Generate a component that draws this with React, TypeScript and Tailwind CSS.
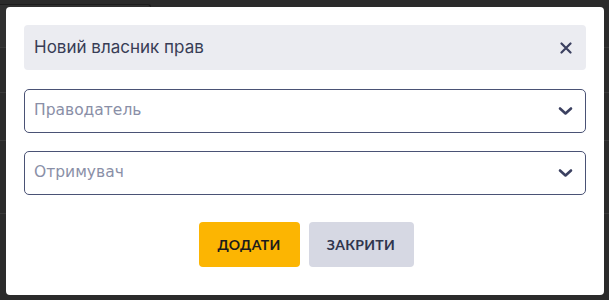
import React from "react";

function Chevron() {
  return (
    <svg width="15" height="14" viewBox="0 0 15 14" fill="none">
      <path d="M2 4.5 L7.5 9.5 L13 4.5" stroke="#3b4060" strokeWidth="2.6" strokeLinecap="round" strokeLinejoin="round" />
    </svg>
  );
}

function Select({ label }: { label: string }) {
  return (
    <div className="h-[44px] rounded-[5px] border border-[#4a5275] flex items-center justify-between pl-[9px] pr-[12px]">
      <span className="text-[15.5px] text-[#8a8fa7]" style={{ fontFamily: "'DejaVu Sans', 'Noto Sans', sans-serif" }}>
        {label}
      </span>
      <Chevron />
    </div>
  );
}

export default function App() {
  return (
    <div className="relative w-[609px] h-[300px] bg-[#2b2b2b] overflow-hidden">
      {/* faint backdrop page */}
      <div className="flex flex-col">
        <div className="h-[4px]" />
        <div className="w-[151px] h-[43px] border-t border-r border-[#1d1d1d] rounded-tr-[3px] bg-[#303030]" />
        <div className="h-[45px] border-t border-[#3a3a3a]" />
        <div className="h-[48px] border-t border-[#3a3a3a]" />
        <div className="h-[73px] border-t border-[#3a3a3a]" />
        <div className="h-[82px] border-t border-[#3a3a3a] flex items-end">
          <div className="w-[207px] h-[5px]" />
          <div className="w-[156px] h-[5px] border-l border-[#1a1a1a]" />
          <div className="w-[10px] h-[5px] border-l border-[#1a1a1a]" />
          <div className="h-[5px] border-l border-[#1a1a1a]" />
        </div>
      </div>

      {/* dialog */}
      <div className="absolute left-[6px] top-[7px] w-[598px] h-[288px] bg-white rounded-[4px] px-[18px] pt-[18px]">
        <div className="h-[45px] rounded-[4px] bg-[#ebecf1] flex items-center justify-between pl-[10px] pr-[14px]">
          <span className="text-[17px] text-[#383d56]" style={{ fontFamily: "Inter, 'Noto Sans', sans-serif" }}>
            Новий власник прав
          </span>
          <svg width="12" height="12" viewBox="0 0 12 12" fill="none">
            <path d="M1.5 1.5 L10.5 10.5 M10.5 1.5 L1.5 10.5" stroke="#3b4060" strokeWidth="2.2" strokeLinecap="round" />
          </svg>
        </div>
        <div className="mt-[19px] flex flex-col gap-[18px]">
          <Select label="Праводатель" />
          <Select label="Отримувач" />
        </div>
        <div className="mt-[27px] flex justify-center gap-[9px] pl-[2px]">
          <button
            className="w-[101px] h-[45px] rounded-[4px] bg-[#fcb502] text-[14px] font-bold text-[#1c1c1c] tracking-[0.3px]"
            style={{ fontFamily: "Lato, 'Noto Sans', sans-serif" }}
          >
            ДОДАТИ
          </button>
          <button
            className="w-[105px] h-[45px] rounded-[4px] bg-[#d6d8e3] text-[14px] font-bold text-[#30354d] tracking-[0.3px]"
            style={{ fontFamily: "Lato, 'Noto Sans', sans-serif" }}
          >
            ЗАКРИТИ
          </button>
        </div>
      </div>
    </div>
  );
}
